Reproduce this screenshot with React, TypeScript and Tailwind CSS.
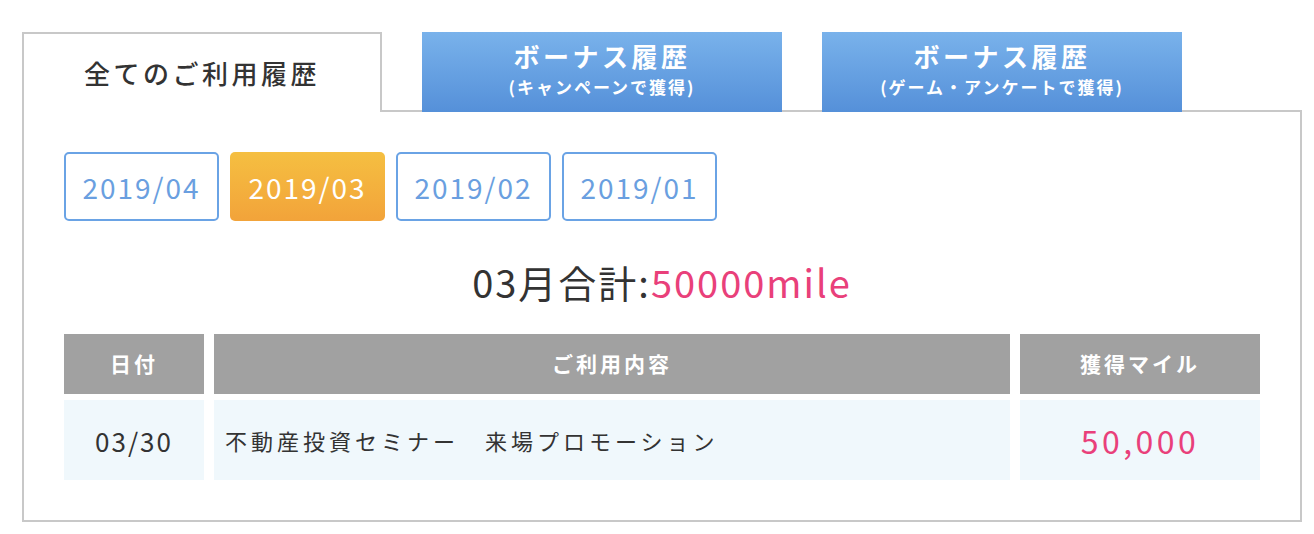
const font = "font-['Noto_Sans_CJK_JP',sans-serif]";

const months = ["2019/04", "2019/03", "2019/02", "2019/01"];

const BonusTab = ({ sub }: { sub: string }) => (
  <div className="flex h-[80px] w-[360px] flex-col items-center bg-gradient-to-b from-[#79b2eb] to-[#5590d9] pt-[9px] text-white">
    <span className="text-[26px] font-bold leading-[30px] tracking-[3.5px]">ボーナス履歴</span>
    <span className="mt-[5px] text-[17px] font-bold leading-[22px] tracking-[2px]">{sub}</span>
  </div>
);

export default function App() {
  const active = "2019/03";

  return (
    <div className={`${font} h-[534px] w-[1314px] bg-white pl-[22px] pt-[32px] text-[#333]`}>
      <div className="relative z-10 -mb-[2px] flex gap-[40px]">
        <div className="flex h-[80px] w-[360px] items-center justify-center border-2 border-b-0 border-[#c8c8c8] bg-white pb-[2px]">
          <span className="text-[26px] font-medium tracking-[3.5px]">全てのご利用履歴</span>
        </div>
        <BonusTab sub="(キャンペーンで獲得)" />
        <BonusTab sub="(ゲーム・アンケートで獲得)" />
      </div>

      <div className="w-[1280px] border-2 border-[#c8c8c8] px-[40px] py-[40px]">
        <div className="flex gap-[11px]">
          {months.map((mo) =>
            mo === active ? (
              <button
                key={mo}
                type="button"
                className="h-[69px] w-[155px] rounded-[5px] bg-gradient-to-b from-[#f5bf41] to-[#f2a33a] text-[28px] tracking-[2px] text-white"
              >
                {mo}
              </button>
            ) : (
              <button
                key={mo}
                type="button"
                className="h-[69px] w-[155px] rounded-[5px] border-2 border-[#6aa3e5] bg-white text-[28px] tracking-[2px] text-[#6a9fe0]"
              >
                {mo}
              </button>
            ),
          )}
        </div>

        <div className="flex h-[113px] items-center justify-center pt-[9px] text-[38px] leading-none tracking-[2px]">
          <span>03月合計:</span>
          <span className="text-[#e9407a]">50000mile</span>
        </div>

        <div className="grid grid-cols-[140px_796px_240px] gap-x-[10px] gap-y-[6px]">
          <div className="flex h-[60px] items-center justify-center bg-[#a1a1a1] text-[21px] font-bold tracking-[3px] text-white">日付</div>
          <div className="flex h-[60px] items-center justify-center bg-[#a1a1a1] text-[21px] font-bold tracking-[3px] text-white">ご利用内容</div>
          <div className="flex h-[60px] items-center justify-center bg-[#a1a1a1] text-[21px] font-bold tracking-[3px] text-white">獲得マイル</div>

          <div className="flex h-[80px] items-center justify-center bg-[#f0f8fc] text-[26px] tracking-[2px]">03/30</div>
          <div className="flex h-[80px] items-center bg-[#f0f8fc] pl-[11px] text-[22px] tracking-[4px]">不動産投資セミナー　来場プロモーション</div>
          <div className="flex h-[80px] items-center justify-center bg-[#f0f8fc] text-[32px] tracking-[3.5px] text-[#e9407a]">50,000</div>
        </div>
      </div>
    </div>
  );
}
